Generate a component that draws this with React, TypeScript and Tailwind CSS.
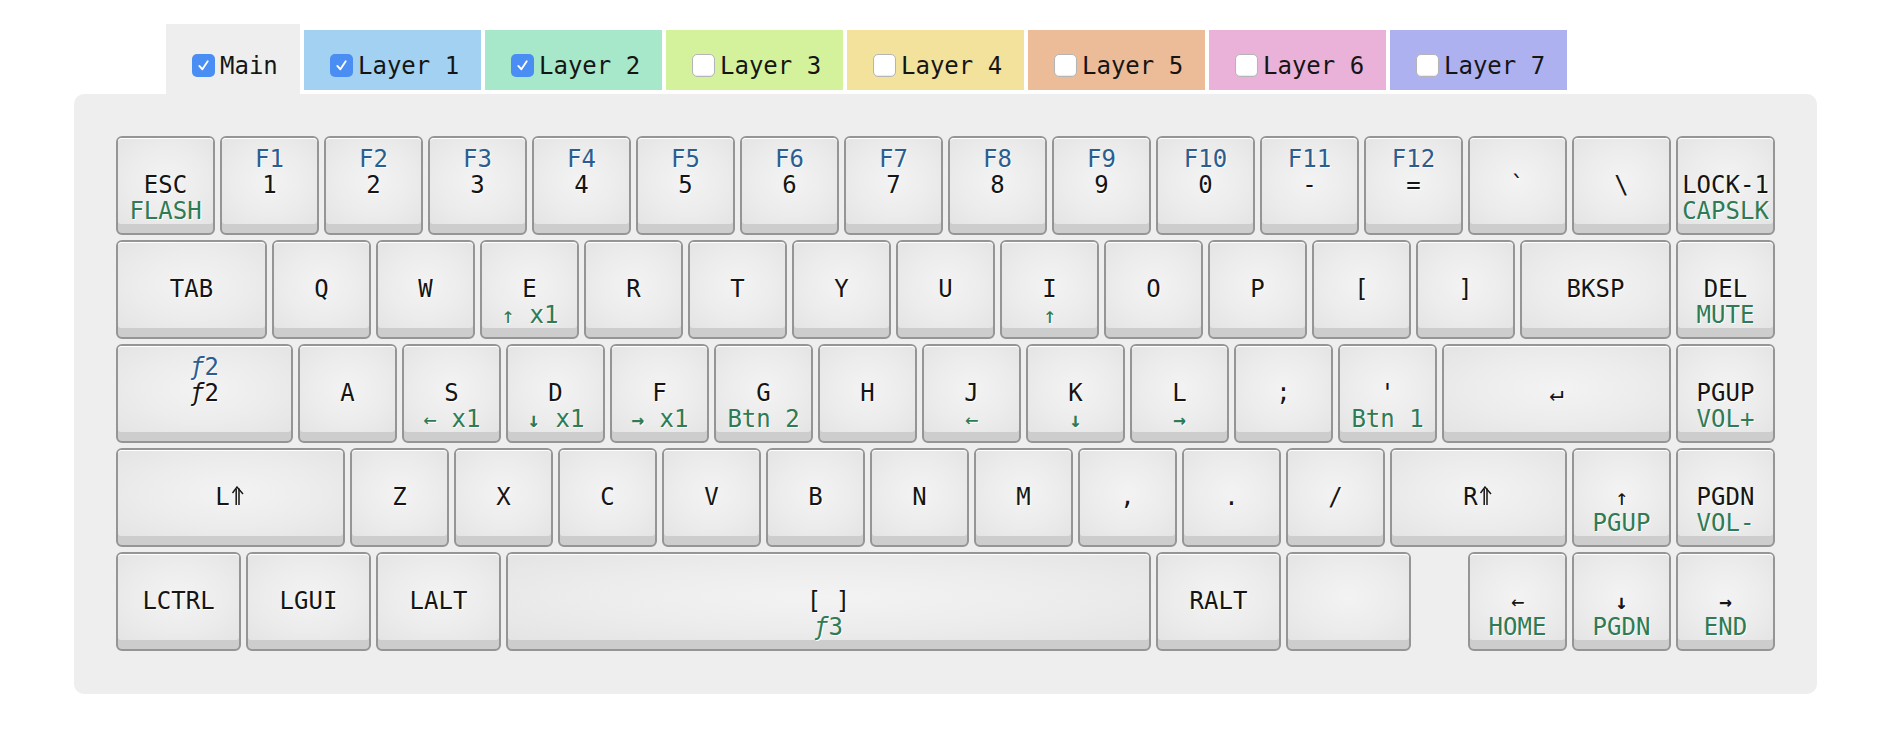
import React from "react";

type KeyDef = {
  w?: number;
  top?: React.ReactNode;
  mid?: React.ReactNode;
  bot?: React.ReactNode;
  spacer?: boolean;
};

const WIDTH: Record<string, string> = {
  "0.5": "w-[47px]",
  "1": "w-[99px]",
  "1.25": "w-[125px]",
  "1.5": "w-[151px]",
  "1.75": "w-[177px]",
  "2.25": "w-[229px]",
  "6.25": "w-[645px]",
};

const Up = () => (
  <span className="inline-block w-[14.5px] text-center text-[22px] font-normal">↑</span>
);
const Left = () => (
  <span className="inline-block w-[14.5px] text-center text-[22px] font-normal">←</span>
);
const Down = () => (
  <span className="inline-block w-[14.5px] text-center text-[21px] font-bold">↓</span>
);
const Right = () => (
  <span className="inline-block w-[14.5px] text-center text-[21px] font-bold">→</span>
);
const Shift = () => (
  <svg width="15" height="19" viewBox="0 0 15 19" className="inline-block align-baseline ml-[1px]">
    <path d="M1.5 7 L6 1 L12 8" stroke="#151515" strokeWidth="1.4" fill="none" strokeLinejoin="miter" />
    <path d="M5.2 3 V19 M8 2.5 V19" stroke="#151515" strokeWidth="1.5" fill="none" />
  </svg>
);
const F = () => <span className="italic">ƒ</span>;

const rows: KeyDef[][] = [
  [
    { mid: "ESC", bot: "FLASH" },
    { top: "F1", mid: "1" },
    { top: "F2", mid: "2" },
    { top: "F3", mid: "3" },
    { top: "F4", mid: "4" },
    { top: "F5", mid: "5" },
    { top: "F6", mid: "6" },
    { top: "F7", mid: "7" },
    { top: "F8", mid: "8" },
    { top: "F9", mid: "9" },
    { top: "F10", mid: "0" },
    { top: "F11", mid: "-" },
    { top: "F12", mid: "=" },
    { mid: "`" },
    { mid: "\\" },
    { mid: "LOCK-1", bot: "CAPSLK" },
  ],
  [
    { w: 1.5, mid: "TAB" },
    { mid: "Q" },
    { mid: "W" },
    { mid: "E", bot: (<><Up /> x1</>) },
    { mid: "R" },
    { mid: "T" },
    { mid: "Y" },
    { mid: "U" },
    { mid: "I", bot: <Up /> },
    { mid: "O" },
    { mid: "P" },
    { mid: "[" },
    { mid: "]" },
    { w: 1.5, mid: "BKSP" },
    { mid: "DEL", bot: "MUTE" },
  ],
  [
    { w: 1.75, top: (<><F />2</>), mid: (<><F />2</>) },
    { mid: "A" },
    { mid: "S", bot: (<><Left /> x1</>) },
    { mid: "D", bot: (<><Down /> x1</>) },
    { mid: "F", bot: (<><Right /> x1</>) },
    { mid: "G", bot: "Btn 2" },
    { mid: "H" },
    { mid: "J", bot: <Left /> },
    { mid: "K", bot: <Down /> },
    { mid: "L", bot: <Right /> },
    { mid: ";" },
    { mid: "'", bot: "Btn 1" },
    { w: 2.25, mid: "↵" },
    { mid: "PGUP", bot: "VOL+" },
  ],
  [
    { w: 2.25, mid: (<>L<Shift /></>) },
    { mid: "Z" },
    { mid: "X" },
    { mid: "C" },
    { mid: "V" },
    { mid: "B" },
    { mid: "N" },
    { mid: "M" },
    { mid: "," },
    { mid: "." },
    { mid: "/" },
    { w: 1.75, mid: (<>R<Shift /></>) },
    { mid: <Up />, bot: "PGUP" },
    { mid: "PGDN", bot: "VOL-" },
  ],
  [
    { w: 1.25, mid: "LCTRL" },
    { w: 1.25, mid: "LGUI" },
    { w: 1.25, mid: "LALT" },
    { w: 6.25, mid: "[ ]", bot: (<><F />3</>) },
    { w: 1.25, mid: "RALT" },
    { w: 1.25 },
    { w: 0.5, spacer: true },
    { mid: <Left />, bot: "HOME" },
    { mid: <Down />, bot: "PGDN" },
    { mid: <Right />, bot: "END" },
  ],
];

function Key({ k }: { k: KeyDef }) {
  const wc = WIDTH[String(k.w ?? 1)];
  if (k.spacer) return <div className={`${wc} h-[99px] shrink-0`} />;
  return (
    <div
      className={`${wc} h-[99px] shrink-0 rounded-[6px] border-2 border-[#959595] bg-[#cdcdcd] flex flex-col`}
    >
      <div className="h-[86px] rounded-t-[4px] rounded-b-[3px] bg-[radial-gradient(ellipse_at_center,#f3f3f3_0%,#ececec_55%,#e4e4e4_100%)] shadow-[inset_0_1px_0_#ffffff] pt-[8px] flex flex-col items-center [text-shadow:1px_1px_0_#ffffff] whitespace-pre">
        <div className="h-[26px] leading-[26px] text-[#2b5e90]">{k.top ?? ""}</div>
        <div className="h-[26px] leading-[26px] text-[#151515]">{k.mid ?? ""}</div>
        <div className="h-[26px] leading-[26px] text-[#2e7b55]">{k.bot ?? ""}</div>
      </div>
    </div>
  );
}

function CheckBox({ checked }: { checked: boolean }) {
  if (checked) {
    return (
      <span className="inline-flex w-[23px] h-[23px] rounded-[5px] bg-[#4a8df3] items-center justify-center shrink-0">
        <svg width="15" height="15" viewBox="0 0 16 16">
          <path d="M3.5 8.5 L6.8 12 L12.5 3.5" stroke="#ffffff" strokeWidth="2" fill="none" strokeLinecap="round" strokeLinejoin="round" />
        </svg>
      </span>
    );
  }
  return (
    <span className="inline-block w-[23px] h-[23px] rounded-[5px] bg-white border border-[#b5b5b5] shadow-[inset_0_-1px_1px_rgba(0,0,0,0.08)] shrink-0" />
  );
}

const layers = [
  { name: "Layer 1", bg: "bg-[#a2d1f1]", checked: true },
  { name: "Layer 2", bg: "bg-[#a6e8c9]", checked: true },
  { name: "Layer 3", bg: "bg-[#d4f29b]", checked: false },
  { name: "Layer 4", bg: "bg-[#f2e29c]", checked: false },
  { name: "Layer 5", bg: "bg-[#ecbc98]", checked: false },
  { name: "Layer 6", bg: "bg-[#eab1d9]", checked: false },
  { name: "Layer 7", bg: "bg-[#aeb1f0]", checked: false },
];

export default function App() {
  return (
    <div className="w-[1898px] h-[736px] bg-white pt-[24px] font-['DejaVu_Sans_Mono',monospace] text-[24px] text-[#151515] overflow-hidden">
      <div className="ml-[166px] flex gap-[4px] h-[70px]">
        <div className="w-[134px] h-[70px] bg-[#eeeeee] pl-[26px] pt-[27px] flex items-start gap-[5px]">
          <span className="mt-[3px] flex"><CheckBox checked /></span>
          <span className="leading-[28px] mt-[1px]">Main</span>
        </div>
        {layers.map((l) => (
          <div
            key={l.name}
            className={`w-[177px] h-[60px] mt-[6px] ${l.bg} pl-[26px] pt-[21px] flex items-start gap-[5px]`}
          >
            <span className="mt-[3px] flex"><CheckBox checked={l.checked} /></span>
            <span className="leading-[28px] mt-[1px]">{l.name}</span>
          </div>
        ))}
      </div>
      <div className="ml-[74px] w-[1743px] h-[600px] rounded-[10px] bg-[#eeeeee] p-[42px] flex flex-col gap-[5px]">
        {rows.map((r, i) => (
          <div key={i} className="flex gap-[5px]">
            {r.map((k, j) => (
              <Key key={j} k={k} />
            ))}
          </div>
        ))}
      </div>
    </div>
  );
}
